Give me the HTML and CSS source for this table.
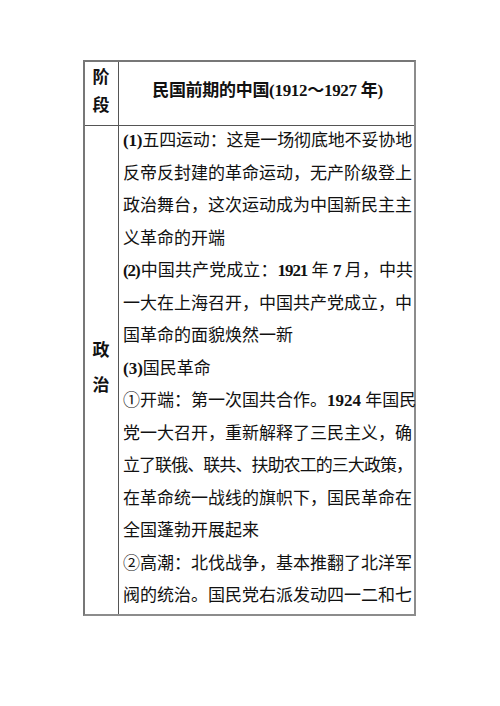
FILE: index.html
```html
<!DOCTYPE html>
<html lang="zh-CN">
<head>
<meta charset="utf-8">
<title>民国前期的中国</title>
<link rel="stylesheet" href="styles.css">
</head>
<body>
<div class="page">
  <div class="grid">
    <div class="cell side head">
      <div class="stack"><span>阶</span><span>段</span></div>
    </div>
    <div class="cell title head">民国前期的中国<span class="num">(1912</span>～<span class="num">1927 </span>年<span class="num">)</span></div>
    <div class="cell side">
      <div class="stack big"><span>政</span><span>治</span></div>
    </div>
    <div class="cell content">
      <div class="ln full t0"><span class="num">(1)</span>五四运动：这是一场彻底地不妥协地</div>
      <div class="ln full">反帝反封建的革命运动，无产阶级登上</div>
      <div class="ln full">政治舞台，这次运动成为中国新民主主</div>
      <div class="ln">义革命的开端</div>
      <div class="ln full t2"><span class="num">(2)</span>中国共产党成立：<span class="num">1921 </span>年 <span class="num">7 </span>月，中共</div>
      <div class="ln full">一大在上海召开，中国共产党成立，中</div>
      <div class="ln">国革命的面貌焕然一新</div>
      <div class="ln"><span class="num">(3)</span>国民革命</div>
      <div class="ln full">①开端：第一次国共合作。<span class="num">1924 </span>年国民</div>
      <div class="ln full">党一大召开，重新解释了三民主义，确</div>
      <div class="ln full t1">立了联俄、联共、扶助农工的三大政策，</div>
      <div class="ln full">在革命统一战线的旗帜下，国民革命在</div>
      <div class="ln">全国蓬勃开展起来</div>
      <div class="ln full">②高潮：北伐战争，基本推翻了北洋军</div>
      <div class="ln full">阀的统治。国民党右派发动四一二和七</div>
    </div>
  </div>
</div>
</body>
</html>
```

FILE: styles.css
```css
html, body {
  margin: 0;
  padding: 0;
  background: #ffffff;
}

.page {
  padding: 60px 0 0 83px;
  font-family: "Liberation Serif", "Noto Sans CJK SC", serif;
  color: #111;
}

.grid {
  box-sizing: border-box;
  width: 333px;
  height: 556px;
  display: grid;
  grid-template-columns: 34px 295px;
  grid-template-rows: 64px 488px;
  border: 2px solid #8c8c8c;
  border-top-color: #777;
  border-left-color: #777;
}

.cell {
  box-sizing: border-box;
  overflow: visible;
  min-width: 0;
}

.side {
  border-right: 1px solid #555;
  display: flex;
  justify-content: center;
}

.head {
  border-bottom: 1px solid #555;
}

.stack {
  display: flex;
  flex-direction: column;
  align-items: center;
  font-family: "Noto Sans CJK SC", sans-serif;
  font-weight: 700;
  font-size: 17px;
  line-height: 28px;
  padding-top: 0;
  padding-right: 1px;
}

.big {
  line-height: 35px;
  padding-top: 205px;
}

.title {
  text-align: center;
  font-weight: 700;
  font-size: 17px;
  line-height: 26px;
  padding-top: 16px;
  padding-left: 4px;
  padding-right: 2px;
  letter-spacing: -0.3px;
}

.num {
  font-weight: 700;
  font-family: "Liberation Serif", serif;
}

.content {
  padding: 0 2px 0 4px;
  font-size: 17px;
}

.ln {
  height: 32.5px;
  line-height: 32.5px;
  white-space: nowrap;
}

.content .ln:first-child {
  margin-top: -1px;
}

.full {
  text-align: justify;
  text-align-last: justify;
}

.t0 {
  letter-spacing: -0.2px;
}

.t1 {
  letter-spacing: -1px;
}

.t2 {
  letter-spacing: -1.1px;
}
```
